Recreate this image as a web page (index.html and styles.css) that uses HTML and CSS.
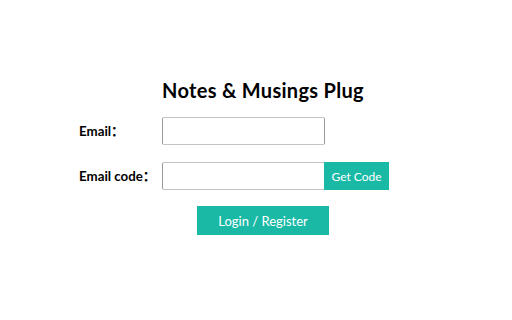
FILE: index.html
```html
<!DOCTYPE html>
<html>
<head>
<meta charset="utf-8">
<link rel="stylesheet" href="styles.css">
</head>
<body>
<div class="page">
  <div class="form">
    <div></div>
    <h1 class="title">Notes &amp; Musings Plug</h1>
    <label class="label">Email：</label>
    <div class="field"><input class="input" type="text"></div>
    <label class="label">Email code：</label>
    <div class="field"><input class="input" type="text"><button class="btn code">Get Code</button></div>
    <div></div>
    <div class="field"><button class="btn submit">Login / Register</button></div>
  </div>
</div>
</body>
</html>
```
FILE: styles.css
```css
html, body {
  margin: 0;
  padding: 0;
  background: #fff;
}
.page {
  padding: 78px 0 0 79px;
  font-family: Lato, "Noto Sans CJK SC", sans-serif;
  color: #000;
}
.form {
  display: grid;
  grid-template-columns: 83px auto;
  row-gap: 17px;
  align-items: center;
}
.title {
  margin: 0 0 -2px 0;
  font-size: 20px;
  line-height: 24px;
  font-weight: 700;
  letter-spacing: 0.3px;
}
.label {
  font-size: 13.3px;
  font-weight: 700;
  line-height: 27px;
  padding-top: 1px;
}
.field {
  display: flex;
  height: 28px;
}
.input {
  box-sizing: border-box;
  width: 163px;
  height: 28px;
  margin: 0;
  border: 1px solid;
  border-color: #c4c4c4 #9a9a9a;
  border-radius: 2px;
  background: #fff;
  padding: 0 6px;
}
.btn {
  border: 0;
  margin: 0;
  background: #19b9a6;
  color: #fff;
  font-family: Lato, sans-serif;
  cursor: pointer;
}
.code {
  width: 65px;
  height: 28px;
  font-size: 12px;
  margin-left: -1px;
}
.submit {
  width: 132px;
  height: 29px;
  margin: -1px 0 0 35px;
  font-size: 13px;
}
```
